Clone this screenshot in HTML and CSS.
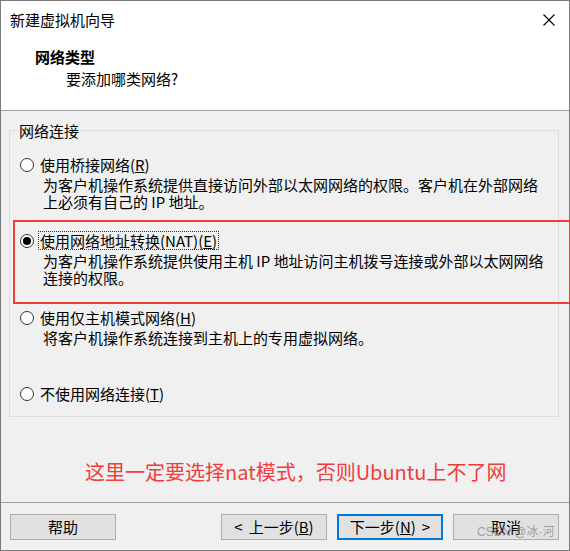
FILE: index.html
```html
<!DOCTYPE html>
<html lang="zh-CN">
<head>
<meta charset="utf-8">
<title>新建虚拟机向导</title>
<link rel="stylesheet" href="styles.css">
</head>
<body>
<div class="window">
  <div class="top">
    <div class="titlebar">
      <span class="title">新建虚拟机向导</span>
      <svg class="close" width="12" height="12" viewBox="0 0 12 12"><path d="M0.5 0.5 L11.5 11.5 M11.5 0.5 L0.5 11.5" stroke="#000" stroke-width="1.1" fill="none"/></svg>
    </div>
    <div class="header">
      <div class="h-title">网络类型</div>
      <div class="h-sub">要添加哪类网络?</div>
    </div>
  </div>
  <div class="body">
    <fieldset class="group">
      <legend>网络连接</legend>
      <div class="option opt1"><span class="radio"></span><span class="label">使用桥接网络(<u>R</u>)</span></div>
      <div class="desc">为客户机操作系统提供直接访问外部以太网网络的权限。客户机在外部网络<br>上必须有自己的 IP 地址。</div>
      <div class="option opt2"><span class="radio checked"></span><span class="label focus">使用网络地址转换(NAT)(<u>E</u>)</span></div>
      <div class="desc">为客户机操作系统提供使用主机 IP 地址访问主机拨号连接或外部以太网网络<br>连接的权限。</div>
      <div class="option opt3"><span class="radio"></span><span class="label">使用仅主机模式网络(<u>H</u>)</span></div>
      <div class="desc">将客户机操作系统连接到主机上的专用虚拟网络。</div>
      <div class="option opt4"><span class="radio"></span><span class="label">不使用网络连接(<u>T</u>)</span></div>
    </fieldset>
    <div class="note">这里一定要选择nat模式，否则Ubuntu上不了网</div>
  </div>
  <div class="footer">
    <button class="btn">帮助</button>
    <div class="nav">
      <button class="btn"><span class="arr-l">&lt;</span>上一步(<u>B</u>)</button>
      <button class="btn default">下一步(<u>N</u>)<span class="arr-r">&gt;</span></button>
      <button class="btn">取消</button>
    </div>
  </div>
  <div class="redbox"></div>
  <div class="watermark">CSDN @冰·河</div>
</div>
</body>
</html>
```

FILE: styles.css
```css
* { box-sizing: border-box; }
html, body {
  margin: 0;
  padding: 0;
  background: #f0f0f0;
}
body {
  font-family: "Noto Sans CJK SC", "Noto Sans", sans-serif;
  font-size: 15px;
  color: #000;
}
.window {
  position: relative;
  width: 570px;
  height: 551px;
  border: 1px solid #7a7a7a;
  display: flex;
  flex-direction: column;
  background: #f0f0f0;
}
.top {
  height: 110px;
  background: #fff;
  border-bottom: 1px solid #a0a0a0;
  flex: none;
}
.titlebar {
  height: 38px;
  display: flex;
  align-items: center;
  justify-content: space-between;
  padding: 0 14px 0 9px;
}
.title {
  font-size: 15px;
  line-height: 20px;
}
.close { display: block; }
.header {
  padding-top: 8px;
}
.h-title {
  font-weight: bold;
  line-height: 20px;
  padding-left: 34px;
  margin-bottom: 2px;
}
.h-sub {
  line-height: 20px;
  padding-left: 65px;
}
.body {
  height: 391px;
  flex: none;
  display: flex;
  flex-direction: column;
}
.group {
  margin: 11px 0 0 8px;
  width: 550px;
  border: 1px solid #dcdcdc;
  padding: 17px 10px 14px 10px;
  min-width: 0;
}
.group legend {
  line-height: 17px;
  padding: 0 2px;
  margin-left: -3px;
}
.option {
  display: flex;
  align-items: center;
  height: 17px;
}
.opt2 { margin-top: 22px; }
.opt3 { margin-top: 23px; }
.opt4 { margin-top: 39px; }
.radio {
  width: 14px;
  height: 14px;
  border: 1px solid #333;
  border-radius: 50%;
  background: #fff;
  margin-right: 4px;
  flex: none;
  display: flex;
  align-items: center;
  justify-content: center;
}
.radio.checked::after {
  content: "";
  width: 8px;
  height: 8px;
  border-radius: 50%;
  background: #000;
}
.label {
  line-height: 15px;
  padding: 1px;
  border: 1px dotted transparent;
  white-space: nowrap;
}
.label.focus {
  border-color: #333;
}
.desc {
  margin-top: 3px;
  padding-left: 23px;
  line-height: 17px;
  white-space: nowrap;
}
.note {
  margin-top: 42px;
  padding-left: 84px;
  font-size: 20px;
  line-height: 26px;
  color: #f03c3c;
  white-space: nowrap;
}
.footer {
  flex: none;
  height: 48px;
  border-top: 1px solid #a0a0a0;
  display: flex;
  justify-content: space-between;
  align-items: flex-start;
  padding: 11px 10px 0 9px;
}
.nav {
  display: flex;
  gap: 10px;
}
.btn {
  width: 106px;
  height: 26px;
  background: #e1e1e1;
  border: 1px solid #adadad;
  font-family: "Noto Sans CJK SC", "Noto Sans", sans-serif;
  font-size: 15px;
  line-height: 20px;
  color: #000;
  padding: 0;
  margin: 0;
  white-space: nowrap;
}
.arr-l { margin-right: 6px; }
.arr-r { margin-left: 6px; }
.btn.default {
  border: 2px solid #0078d7;
}
.redbox {
  position: absolute;
  left: 12px;
  top: 219px;
  width: 558px;
  height: 84px;
  border: 2px solid #f23c3c;
  pointer-events: none;
}
.watermark {
  position: absolute;
  left: 476px;
  top: 523px;
  font-family: "Liberation Sans", "Noto Sans CJK SC", sans-serif;
  font-size: 12px;
  line-height: 16px;
  color: rgba(140, 140, 140, 0.8);
  white-space: nowrap;
}
```
